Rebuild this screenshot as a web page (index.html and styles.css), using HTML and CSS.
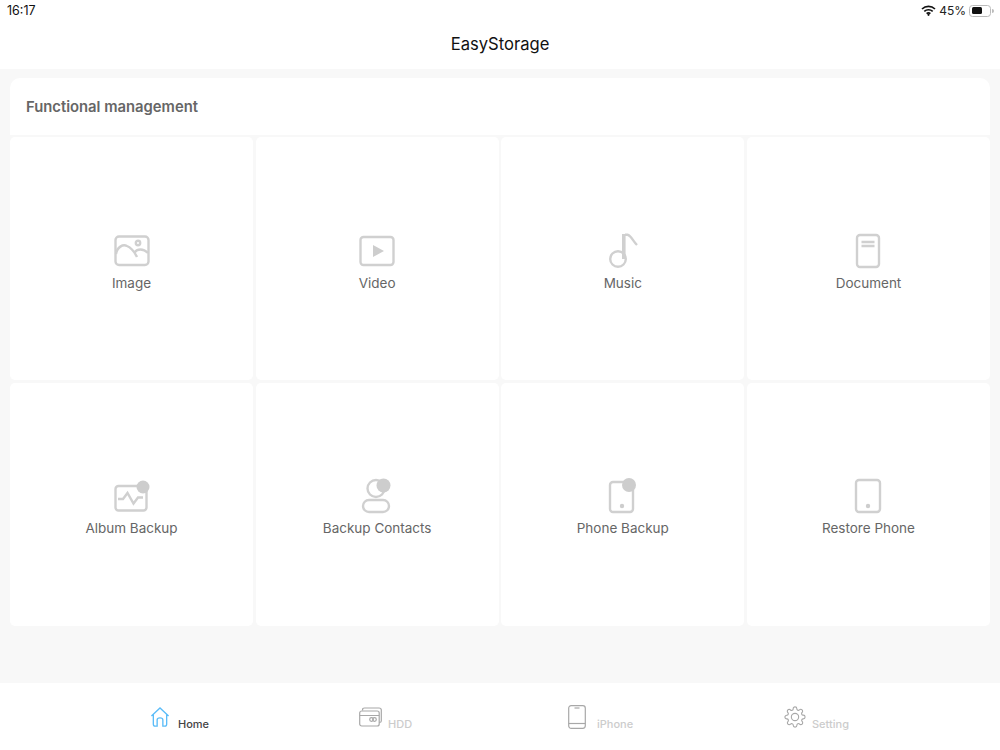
FILE: index.html
```html
<!DOCTYPE html>
<html lang="en">
<head>
    <meta charset="UTF-8">
    <meta name="viewport" content="width=device-width, initial-scale=1.0">
    <title>EasyStorage</title>
    <link rel="stylesheet" href="styles.css">
</head>
<body>
    <header class="top-bar">
        <div class="status-bar">
            <span class="clock">16:17</span>
            <div class="status-right">
                <svg class="wifi" width="15" height="11" viewBox="0 0 15 11">
                    <path d="M1 4 A9.5 9.5 0 0 1 14 4" />
                    <path d="M3.3 6.4 A6.2 6.2 0 0 1 11.7 6.4" />
                    <path d="M5.6 8.6 A3 3 0 0 1 9.4 8.6" />
                    <circle cx="7.5" cy="9.8" r="1.1" />
                </svg>
                <span class="battery-text">45%</span>
                <div class="battery"><div class="battery-level"></div></div>
                <div class="battery-tip"></div>
            </div>
        </div>
        <h1 class="app-title">EasyStorage</h1>
    </header>

    <main class="content">
        <div class="section-title">Functional management</div>
        <div class="grid">
            <div class="cell">
                <svg class="icon" width="36" height="36" viewBox="0 -2 36 36">
                    <rect x="1.5" y="1.5" width="33" height="28.5" rx="3.5" />
                    <path d="M2 19 C3 12 9 9 13 11 C18 13 21 18 23 22 M21 17 C23 14 29 13 34 18" />
                    <circle cx="24" cy="8" r="2.2" />
                </svg>
                <span class="cell-label">Image</span>
            </div>
            <div class="cell">
                <svg class="icon" width="36" height="36" viewBox="0 -2 36 36">
                    <rect x="1.5" y="2" width="33" height="28" rx="3" />
                    <path class="solid" d="M14 10 L25 16 L14 22 Z" />
                </svg>
                <span class="cell-label">Video</span>
            </div>
            <div class="cell">
                <svg class="icon" width="30" height="36" viewBox="0 0 30 36">
                    <circle cx="10" cy="26" r="7.8" />
                    <path class="thick" d="M15.8 26 V1" />
                    <path d="M17 1.8 H19.5 C23 2.5 25 8 29 12" />
                </svg>
                <span class="cell-label">Music</span>
            </div>
            <div class="cell">
                <svg class="icon" width="26" height="36" viewBox="0 0 26 36">
                    <rect x="2" y="2" width="22" height="32" rx="3" />
                    <path d="M6.5 9 H19.5 M6.5 13 H19.5" />
                </svg>
                <span class="cell-label">Document</span>
            </div>
            <div class="cell">
                <svg class="icon" width="36" height="36" viewBox="0 -2 36 36">
                    <rect x="1.5" y="6" width="31" height="24.5" rx="3" />
                    <path d="M4 19 H9 L13.5 13 L19.5 23.5 L24 17.5 H29" />
                    <circle class="solid" cx="29" cy="7" r="6.5" />
                </svg>
                <span class="cell-label">Album Backup</span>
            </div>
            <div class="cell">
                <svg class="icon" width="32" height="36" viewBox="0 0 32 36">
                    <circle cx="15" cy="10.5" r="8.5" />
                    <rect x="2" y="22" width="26" height="12" rx="6" />
                    <circle class="solid" cx="22.5" cy="7.5" r="7" />
                </svg>
                <span class="cell-label">Backup Contacts</span>
            </div>
            <div class="cell">
                <svg class="icon" width="30" height="36" viewBox="0 0 30 36">
                    <rect x="2" y="4" width="23" height="30" rx="3" />
                    <circle class="solid" cx="14" cy="28" r="2.2" />
                    <circle class="solid" cx="21" cy="7" r="7" />
                </svg>
                <span class="cell-label">Phone Backup</span>
            </div>
            <div class="cell">
                <svg class="icon" width="28" height="36" viewBox="0 0 28 36">
                    <rect x="2" y="2" width="24" height="32" rx="3" />
                    <circle class="solid" cx="14" cy="28" r="2.2" />
                </svg>
                <span class="cell-label">Restore Phone</span>
            </div>
        </div>
    </main>

    <nav class="tab-bar">
        <div class="tab tab-home">
            <svg class="tab-icon" width="20" height="20" viewBox="0 0 20 21">
                <path d="M1 9.5 L10 1 L19 9.5 M3 8 V18 Q3 20 5 20 H7 V13.5 Q7 11.5 10 11.5 Q13 11.5 13 13.5 V20 H15 Q17 20 17 18 V8" />
            </svg>
            <span class="tab-label">Home</span>
        </div>
        <div class="tab tab-hdd">
            <svg class="tab-icon" width="23" height="20" viewBox="0 0 23 20">
                <rect x="0.7" y="4" width="19.5" height="15" rx="2" />
                <path d="M0.7 8.5 H20.2 M3.5 3.5 V3 Q3.5 1 5.5 1 H20 Q22.3 1 22.3 3 V14 Q22.3 15.5 20.2 15.5" />
                <circle cx="12.5" cy="12.5" r="1.8" />
                <circle cx="15.5" cy="12.5" r="1.8" />
            </svg>
            <span class="tab-label">HDD</span>
        </div>
        <div class="tab tab-phone">
            <svg class="tab-icon" width="18" height="24" viewBox="0 0 18 24">
                <rect x="0.7" y="0.7" width="16.6" height="22.6" rx="2.5" />
                <path d="M0.7 18.5 H17.3" />
                <path d="M6.5 3 H11.5" />
            </svg>
            <span class="tab-label">iPhone</span>
        </div>
        <div class="tab tab-setting">
            <svg class="tab-icon" width="22" height="22" viewBox="0 0 24 24">
                <circle cx="12" cy="12" r="4" />
                <path d="M19.4 15a1.65 1.65 0 0 0 .33 1.82l.06.06a2 2 0 0 1 0 2.83 2 2 0 0 1-2.83 0l-.06-.06a1.65 1.65 0 0 0-1.82-.33 1.65 1.65 0 0 0-1 1.51V21a2 2 0 0 1-2 2 2 2 0 0 1-2-2v-.09A1.65 1.65 0 0 0 9 19.4a1.65 1.65 0 0 0-1.82.33l-.06.06a2 2 0 0 1-2.83 0 2 2 0 0 1 0-2.83l.06-.06a1.65 1.65 0 0 0 .33-1.82 1.65 1.65 0 0 0-1.51-1H3a2 2 0 0 1-2-2 2 2 0 0 1 2-2h.09A1.65 1.65 0 0 0 4.6 9a1.65 1.65 0 0 0-.33-1.82l-.06-.06a2 2 0 0 1 0-2.83 2 2 0 0 1 2.83 0l.06.06a1.65 1.65 0 0 0 1.82.33H9a1.65 1.65 0 0 0 1-1.51V3a2 2 0 0 1 2-2 2 2 0 0 1 2 2v.09a1.65 1.65 0 0 0 1 1.51 1.65 1.65 0 0 0 1.82-.33l.06-.06a2 2 0 0 1 2.83 0 2 2 0 0 1 0 2.83l-.06.06a1.65 1.65 0 0 0-.33 1.82V9a1.65 1.65 0 0 0 1.51 1H21a2 2 0 0 1 2 2 2 2 0 0 1-2 2h-.09a1.65 1.65 0 0 0-1.51 1z" />
            </svg>
            <span class="tab-label">Setting</span>
        </div>
    </nav>
</body>
</html>
```

FILE: styles.css
```css
* {
    margin: 0;
    padding: 0;
    box-sizing: border-box;
}

body {
    width: 1000px;
    height: 750px;
    overflow: hidden;
    background: #f8f8f8;
    font-family: Inter, "Liberation Sans", sans-serif;
    display: flex;
    flex-direction: column;
}

.top-bar {
    height: 69px;
    background: #fff;
}

.status-bar {
    height: 21px;
    padding: 0 6px 0 7px;
    display: flex;
    justify-content: space-between;
    align-items: center;
}

.clock {
    font-size: 12.5px;
    color: #111;
}

.status-right {
    display: flex;
    align-items: center;
    color: #222;
}

.wifi {
    margin-right: 3px;
}

.wifi path {
    fill: none;
    stroke: #111;
    stroke-width: 1.7;
}

.wifi circle {
    fill: #111;
}

.battery-text {
    font-size: 12px;
    margin-right: 3px;
}

.battery {
    width: 22px;
    height: 12px;
    padding: 1.5px;
    border: 1px solid #bbb;
    border-radius: 3.5px;
}

.battery-level {
    width: 10px;
    height: 100%;
    border-radius: 1.5px;
    background: #111;
}

.battery-tip {
    width: 2px;
    height: 4px;
    margin-left: 1px;
    border-radius: 0 2px 2px 0;
    background: #bbb;
}

.app-title {
    margin-top: 3px;
    font-size: 16.6px;
    font-weight: 400;
    line-height: 40px;
    text-align: center;
    color: #111;
}

.content {
    flex: 1;
    padding: 9px 10px 0;
}

.section-title {
    height: 57px;
    padding-left: 16px;
    background: #fff;
    border-radius: 10px 10px 0 0;
    font-size: 14.8px;
    font-weight: 600;
    line-height: 58px;
    color: #666;
}

.grid {
    margin-top: 2px;
    display: grid;
    grid-template-columns: repeat(4, 243px);
    grid-template-rows: repeat(2, 243px);
    gap: 2.5px 2.67px;
}

.cell {
    padding-top: 8px;
    background: #fff;
    border-radius: 5px;
    display: flex;
    flex-direction: column;
    align-items: center;
    justify-content: center;
    gap: 5px;
}

.cell:nth-child(n+5) {
    padding-top: 6px;
}

.icon {
    fill: none;
    stroke: #d0d0d0;
    stroke-width: 2.4;
}

.icon .solid {
    fill: #cdcdcd;
    stroke: none;
}

.icon .thick {
    stroke-width: 3.6;
}

.cell-label {
    font-size: 13.5px;
    line-height: 18px;
    color: #666;
}

.tab-bar {
    height: 67px;
    padding: 19px 0 0 150px;
    background: #fff;
    display: grid;
    grid-template-columns: 209px 209px 216px auto;
    align-items: start;
}

.tab {
    height: 30px;
    display: flex;
    align-items: center;
    gap: 6px;
}

.tab-home {
    gap: 8px;
}

.tab-phone {
    gap: 11px;
}

.tab-icon {
    flex-shrink: 0;
    fill: none;
    stroke: #a8a8a8;
    stroke-width: 1.2;
}

.tab-home .tab-icon {
    stroke: #5bbcf8;
    stroke-width: 1.4;
}

.tab-label {
    align-self: flex-end;
    margin-bottom: 1px;
    font-size: 11px;
    font-weight: 500;
    line-height: 13px;
    color: #ccc;
}

.tab-home .tab-label {
    color: #444;
}
```
